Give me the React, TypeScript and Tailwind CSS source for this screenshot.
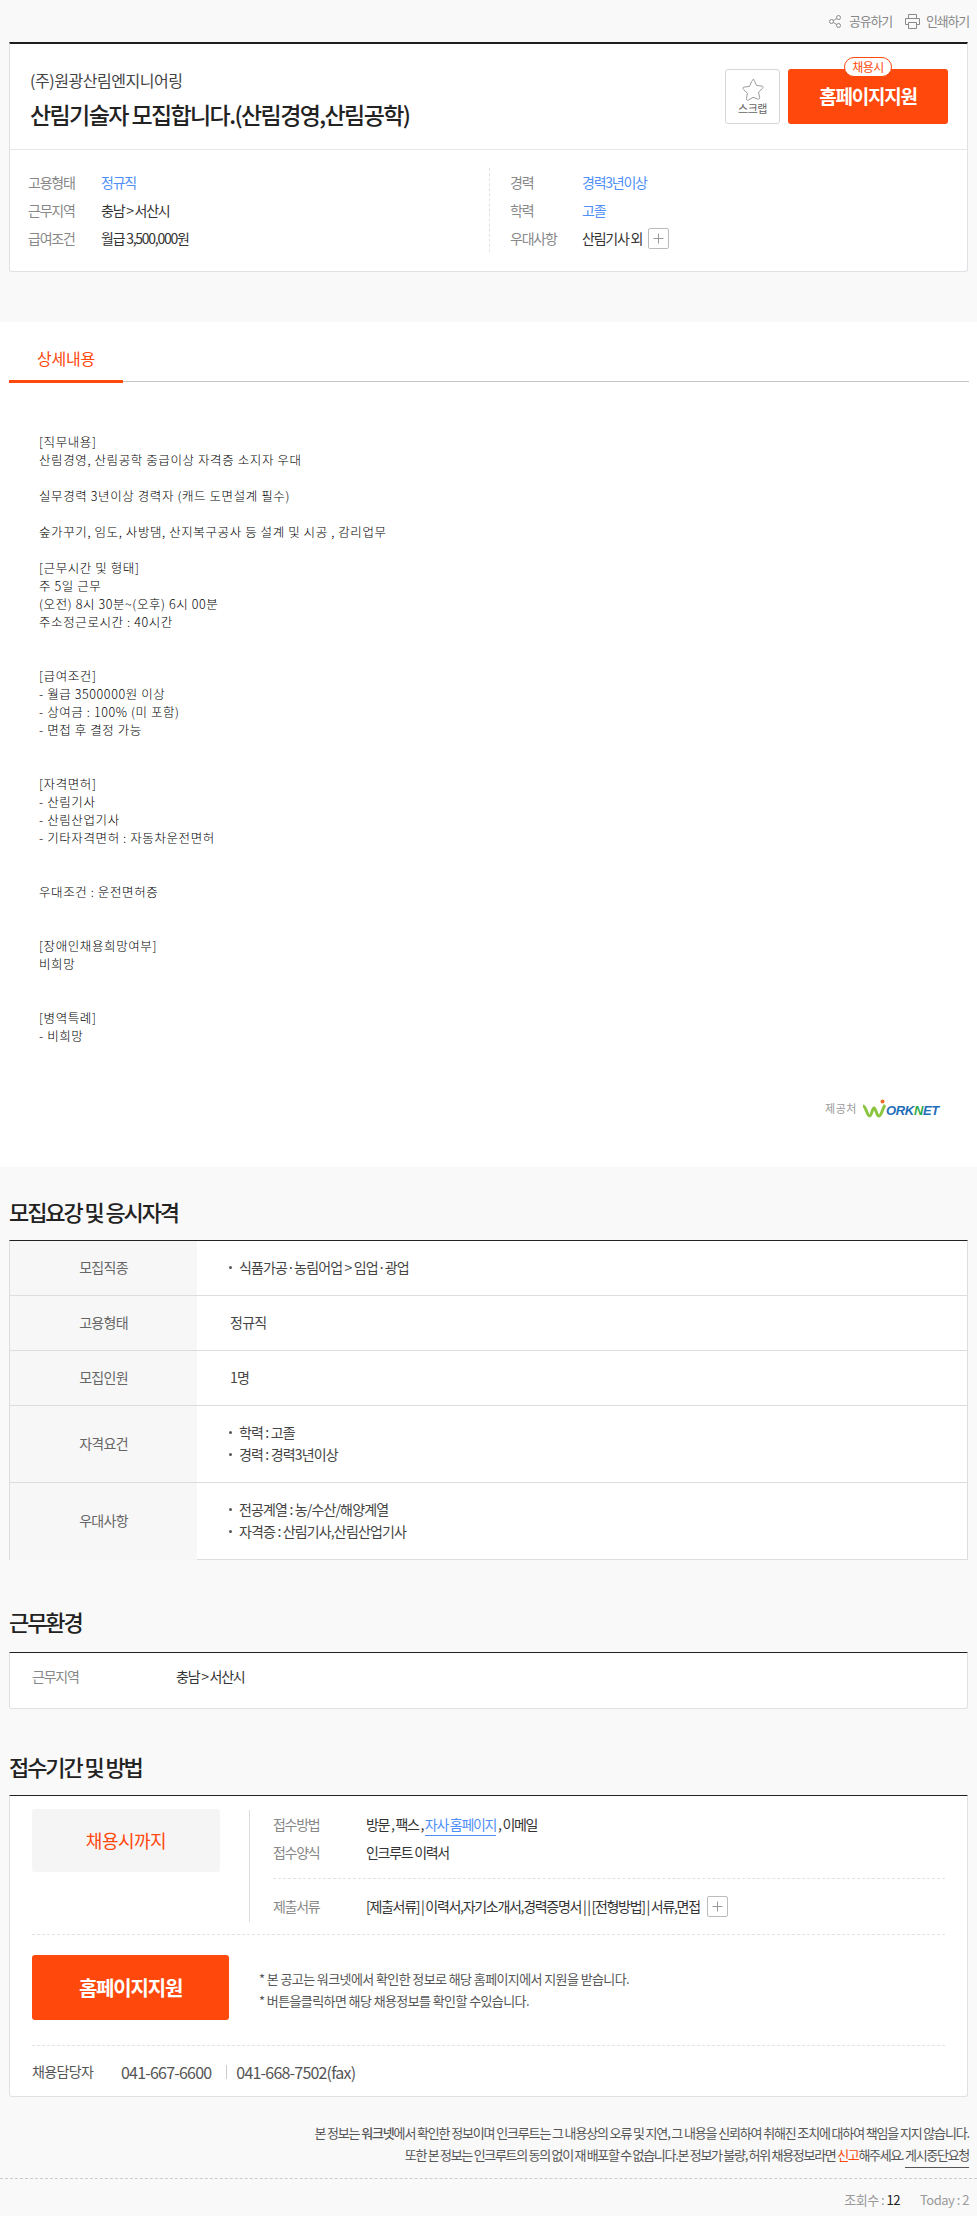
import React from "react";

const font = "font-['Noto_Sans_CJK_KR','Noto_Sans',sans-serif]";

const body = `[직무내용]
산림경영, 산림공학 중급이상 자격증 소지자 우대

실무경력 3년이상 경력자 (캐드 도면설계 필수)

숲가꾸기, 임도, 사방댐, 산지복구공사 등 설계 및 시공 , 감리업무

[근무시간 및 형태]
주 5일 근무
(오전) 8시 30분~(오후) 6시 00분
주소정근로시간 : 40시간


[급여조건]
- 월급 3500000원 이상
- 상여금 : 100% (미 포함)
- 면접 후 결정 가능


[자격면허]
- 산림기사
- 산림산업기사
- 기타자격면허 : 자동차운전면허


우대조건 : 운전면허증


[장애인채용희망여부]
비희망


[병역특례]
- 비희망`;

function PlusBox({ className = "" }: { className?: string }) {
  return (
    <span className={`inline-flex h-[21px] w-[21px] items-center justify-center rounded-[2px] border border-[#bbbbbb] bg-white ${className}`}>
      <svg width="11" height="11" viewBox="0 0 11 11"><path d="M5.5 0.5v10M0.5 5.5h10" stroke="#999" strokeWidth="1" fill="none" /></svg>
    </span>
  );
}

function ShareIcon() {
  return (
    <svg width="12" height="13" viewBox="0 0 12 13" fill="none" stroke="#8a8a8a" strokeWidth="1">
      <circle cx="2.500" cy="6.500" r="2" />
      <circle cx="9.500" cy="2.500" r="2" />
      <circle cx="9.500" cy="10.500" r="2" />
      <path d="M4.300 5.500l3.400-2M4.300 7.500l3.400 2" />
    </svg>
  );
}

function PrintIcon() {
  return (
    <svg width="15" height="15" viewBox="0 0 15 15" fill="none" stroke="#8a8a8a" strokeWidth="1">
      <path d="M3.5 4.5v-4h8v4" />
      <path d="M3.5 10.5h-3v-6h14v6h-3" />
      <path d="M3.5 8.5h8v6h-8z" />
    </svg>
  );
}

function StarIcon() {
  return (
    <svg width="22" height="23" viewBox="0 0 22 23" fill="none" stroke="#9a9a9a" strokeWidth="1" strokeLinejoin="round">
      <path d="M11 1.200c.6 0 .9.500 1.200 1.100l2.300 5.100 5.400.7c1.300.2 1.600 1.400.7 2.200l-4 3.800 1 5.500c.2 1.300-.9 2-2 1.400L11 19.300l-4.600 2.700c-1.100.6-2.200-.1-2-1.400l1-5.500-4-3.800c-.9-.8-.6-2 .7-2.200l5.400-.7 2.300-5.100c.3-.6.600-1.100 1.200-1.100z" />
    </svg>
  );
}

function InfoRow({ label, labelW = "w-[73px]", children }: { label: string; labelW?: string; children: React.ReactNode }) {
  return (
    <div className="flex h-[28px] items-center text-[14px] tracking-[-1.25px]">
      <span className={`${labelW} text-[#888888]`}>{label}</span>
      {children}
    </div>
  );
}

function Heading({ children }: { children: React.ReactNode }) {
  return <h2 className="h-[34px] px-[9px] text-[22px] leading-[31px] font-medium tracking-[-2.1px] text-[#222222]">{children}</h2>;
}

function Bullets({ items }: { items: string[] }) {
  return (
    <ul className="flex flex-col gap-[3px]">
      {items.map((t) => (
        <li key={t} className="flex h-[19px] items-center leading-[19px]">
          <span className="mr-[7px] ml-[-1px] h-[3px] w-[3px] rounded-full bg-[#555555]" />
          <span className="tracking-[-0.85px]">{t}</span>
        </li>
      ))}
    </ul>
  );
}

function ReqRow({ label, h, last, children }: { label: string; h: string; last?: boolean; children: React.ReactNode }) {
  return (
    <div className={`flex ${h} ${last ? "" : "border-b border-[#dddddd]"}`}>
      <div className="flex w-[187px] shrink-0 items-center justify-center bg-[#f7f7f7] pb-[2px] text-[#666666]">{label}</div>
      <div className="flex flex-1 items-center pb-[2px] pl-[33px] text-[#444444]">{children}</div>
    </div>
  );
}

export default function App() {
  return (
    <div className={`${font} h-[2216px] w-[977px] overflow-hidden bg-[#f9f9f9] text-[#333333]`}>
      {/* top tools */}
      <div className="flex h-[42px] items-center justify-end gap-[13px] pr-[8px] text-[13px] tracking-[-1.2px] text-[#888888]">
        <span className="flex items-center gap-[8px]"><ShareIcon />공유하기</span>
        <span className="flex items-center gap-[6px]"><PrintIcon />인쇄하기</span>
      </div>

      {/* summary card */}
      <div className="mx-[9px] h-[230px] rounded-b-[3px] border-x border-t-[2px] border-b border-[#dfe1e5] border-t-[#1e1e1e] bg-white">
        <div className="flex h-[106px] items-start justify-between border-b border-[#e6e6e6] pr-[19px] pl-[20px]">
          <div className="pt-[23px]">
            <p className="h-[26px] text-[16px] leading-[26px] tracking-[-0.45px] text-[#444444]">(주)원광산림엔지니어링</p>
            <p className="mt-[4px] h-[34px] text-[23px] leading-[34px] font-medium tracking-[-1.6px] text-[#222222]">산림기술자 모집합니다.(산림경영,산림공학)</p>
          </div>
          <div className="flex gap-[8px] pt-[25px]">
            <div className="flex h-[55px] w-[55px] flex-col items-center justify-center rounded-[3px] border border-[#d4d7dc] bg-white pb-[1px]">
              <StarIcon />
              <span className="text-[11px] leading-[14px] tracking-[-0.5px] text-[#666666]">스크랩</span>
            </div>
            <div className="relative flex h-[55px] w-[160px] items-center justify-center rounded-[3px] bg-[#ff480b] text-[19px] font-bold tracking-[-1.2px] text-white">
              홈페이지지원
              <span className="absolute top-[-12px] left-[56px] flex h-[20px] w-[48px] items-center justify-center rounded-full border border-[#ff480b] bg-white text-[12px] font-normal tracking-[-0.6px] text-[#ff480b]">채용시</span>
            </div>
          </div>
        </div>
        <div className="flex pt-[18px] pl-[18px]">
          <div className="w-[461px]">
            <InfoRow label="고용형태"><span className="text-[#4f8ff7]">정규직</span></InfoRow>
            <InfoRow label="근무지역"><span>충남 &gt; 서산시</span></InfoRow>
            <InfoRow label="급여조건"><span>월급 3,500,000원</span></InfoRow>
          </div>
          <div className="border-l border-dashed border-[#e2e2e2] pl-[20px]">
            <InfoRow label="경력" labelW="w-[72px]"><span className="text-[#4f8ff7]">경력3년이상</span></InfoRow>
            <InfoRow label="학력" labelW="w-[72px]"><span className="text-[#4f8ff7]">고졸</span></InfoRow>
            <InfoRow label="우대사항" labelW="w-[72px]"><span>산림기사 외</span><PlusBox className="ml-[6px]" /></InfoRow>
          </div>
        </div>
      </div>

      {/* detail */}
      <div className="mt-[50px] h-[845px] bg-white">
        <div className="flex h-[60px] pt-[16px] pl-[9px]">
          <div className="flex-1 pr-[8px]">
            <div className="flex h-[44px] border-b border-[#c4c4c4]">
              <div className="mb-[-1px] flex h-[45px] w-[114px] items-center justify-center border-b-[3px] border-[#ff480b] pb-[3px] text-[16px] tracking-[-0.2px] text-[#ff480b]">상세내용</div>
            </div>
          </div>
        </div>
        <div className="mt-[51px] ml-[39px] h-[641px] text-[12.5px] leading-[18px] font-light tracking-[0.6px] whitespace-pre-line text-[#000000]">{body}</div>
        <div className="mt-[24px] flex h-[20px] items-center justify-end gap-[5px] pr-[38px]">
          <span className="text-[11px] tracking-[0.5px] text-[#999999]">제공처</span>
          <span className="flex items-end">
            <svg width="26" height="19" viewBox="0 0 26 19" fill="none">
              <path d="M1 7c3 0 4 10 6.5 10S10 9 12 9s2.500 8 5 8 4-9 6-11" stroke="#8bc53f" strokeWidth="3" />
              <circle cx="20.500" cy="2.500" r="2" fill="#ef6c23" />
            </svg>
            <span className="ml-[-2px] font-['Liberation_Sans',sans-serif] text-[13px] leading-[15px] font-bold tracking-[-0.3px] text-[#1f6fb8] italic">ORK<span className="text-[#2faa4a]">N</span>ET</span>
          </span>
        </div>
      </div>

      {/* requirements */}
      <div className="mt-[29px]"><Heading>모집요강 및 응시자격</Heading></div>
      <div className="mx-[9px] mt-[10px] h-[320px] border-x border-t border-b border-[#dddddd] border-t-[#222222] bg-white text-[14px] tracking-[-0.7px]">
        <ReqRow label="모집직종" h="h-[55px]"><Bullets items={["식품가공·농림어업 > 임업·광업"]} /></ReqRow>
        <ReqRow label="고용형태" h="h-[55px]">정규직</ReqRow>
        <ReqRow label="모집인원" h="h-[55px]">1명</ReqRow>
        <ReqRow label="자격요건" h="h-[77px]"><Bullets items={["학력 : 고졸", "경력 : 경력3년이상"]} /></ReqRow>
        <ReqRow label="우대사항" h="h-[77px]" last><Bullets items={["전공계열 : 농/수산/해양계열", "자격증 : 산림기사,산림산업기사"]} /></ReqRow>
      </div>

      {/* environment */}
      <div className="mt-[46px]"><Heading>근무환경</Heading></div>
      <div className="mx-[9px] mt-[12px] flex h-[57px] items-center rounded-b-[3px] border-x border-t border-b border-[#e0e0e0] border-t-[#222222] bg-white pb-[8px] pl-[22px] text-[14px] tracking-[-1.25px]">
        <span className="w-[144px] text-[#888888]">근무지역</span>
        <span>충남 &gt; 서산시</span>
      </div>

      {/* apply */}
      <div className="mt-[42px]"><Heading>접수기간 및 방법</Heading></div>
      <div className="mx-[9px] mt-[10px] h-[302px] rounded-b-[3px] border-x border-t border-b border-[#dfe1e5] border-t-[#222222] bg-white px-[22px] pt-[13px]">
        <div className="flex h-[126px] items-start border-b border-dashed border-[#e2e2e2]">
          <div className="flex h-[63px] w-[188px] items-center justify-center rounded-[3px] bg-[#f5f5f5] text-[18px] tracking-[-0.5px] text-[#ff480b]">채용시까지</div>
          <div className="mt-[1px] ml-[29px] h-[112px] flex-1 border-l border-[#dddddd] pl-[23px] text-[14px] tracking-[-1.3px]">
            <div className="h-[69px] border-b border-dashed border-[#e2e2e2]">
              <div className="flex h-[28px] items-center">
                <span className="w-[93px] text-[#888888]">접수방법</span>
                <span>방문 , 팩스 , <span className="border-b border-[#4f8ff7] pb-[1px] text-[#4f8ff7]">자사 홈페이지</span> , 이메일</span>
              </div>
              <div className="flex h-[28px] items-center">
                <span className="w-[93px] text-[#888888]">접수양식</span>
                <span>인크루트 이력서</span>
              </div>
            </div>
            <div className="flex h-[42px] items-end pb-[4px]">
              <span className="w-[93px] text-[#888888]">제출서류</span>
              <span>[제출서류] | 이력서,자기소개서,경력증명서 | | [전형방법] | 서류,면접</span>
              <PlusBox className="ml-[7px]" />
            </div>
          </div>
        </div>
        <div className="flex h-[111px] items-start border-b border-dashed border-[#e2e2e2] pt-[20px]">
          <div className="flex h-[65px] w-[197px] items-center justify-center rounded-[3px] bg-[#ff480b] text-[20px] font-bold tracking-[-1.2px] text-white">홈페이지지원</div>
          <div className="ml-[30px] pt-[13px] text-[13px] leading-[22px] tracking-[-0.6px] text-[#555555]">
            <p>* 본 공고는 워크넷에서 확인한 정보로 해당 홈페이지에서 지원을 받습니다.</p>
            <p>* 버튼을클릭하면 해당 채용정보를 확인할 수있습니다.</p>
          </div>
        </div>
        <div className="flex h-[51px] items-center text-[14px] tracking-[-0.6px] text-[#555555]">
          <span className="w-[89px]">채용담당자</span>
          <span className="text-[16px] tracking-[-0.8px]">041-667-6600</span>
          <span className="mr-[9px] ml-[15px] h-[14px] w-[1px] bg-[#cccccc]" />
          <span className="text-[16px] tracking-[-0.8px]">041-668-7502(fax)</span>
        </div>
      </div>

      {/* footer */}
      <div className="mt-[25px] pr-[8px] text-right text-[13px] leading-[22px] text-[#555555]">
        <p className="tracking-[-1.15px]">본 정보는 <span className="font-medium">워크넷</span>에서 확인한 정보이며 인크루트는 그 내용상의 오류 및 지연, 그 내용을 신뢰하여 취해진 조치에 대하여 책임을 지지 않습니다.</p>
        <p className="tracking-[-1.3px]">또한 본 정보는 인크루트의 동의 없이 재 배포할 수 없습니다.본 정보가 불량, 허위 채용정보라면 <span className="text-[#ff480b]">신고</span>해주세요. <span className="border-b border-[#555555] pb-[3px]">게시중단요청</span></p>
      </div>
      <div className="mt-[12px] border-t border-dashed border-[#cccccc]" />
      <div className="flex h-[41px] items-center justify-end gap-[20px] pr-[8px] text-[13px] tracking-[-0.5px] text-[#999999]">
        <span>조회수 : <span className="text-[#222222]">12</span></span>
        <span>Today : 2</span>
      </div>
    </div>
  );
}
